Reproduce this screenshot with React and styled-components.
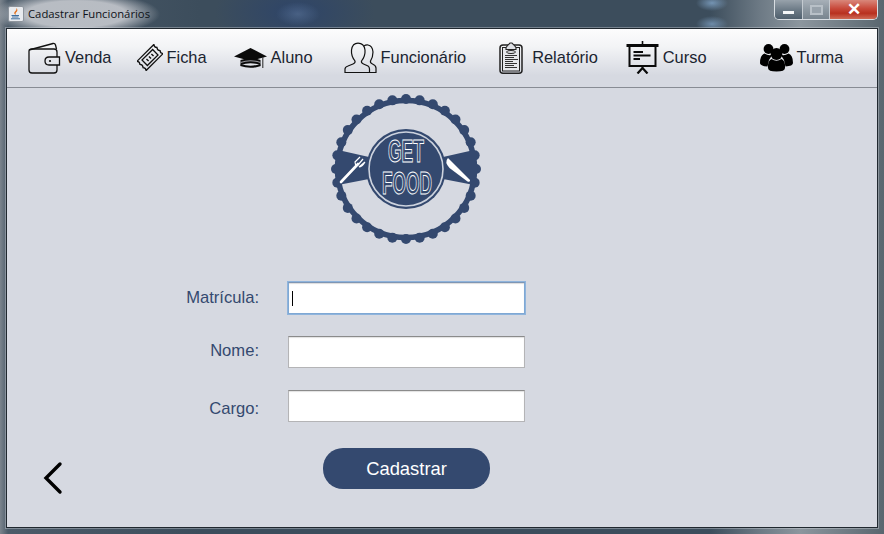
import React from "react"
import styled, { createGlobalStyle } from "styled-components"

const NAVY = "#34496f"
const PANEL = "#d6d9e1"

const GlobalStyle = createGlobalStyle`
  html, body {
    margin: 0;
    padding: 0;
    background: #3c4d5c;
  }
`

const LogoText = styled.text`
  font-family: "Liberation Sans", sans-serif;
  font-size: 31px;
  font-weight: 700;
  text-anchor: middle;
  fill: ${NAVY};
  stroke: #fff;
  stroke-width: 1;
`

const WalletIcon = () => (
  <svg width="34" height="34" viewBox="0 0 34 34" fill="none" stroke="#111" strokeWidth="1.3">
    <path d="M2 9 L26 2.5 Q28 2.2 28.5 4 L29.5 8" />
    <path d="M30 16 V11 Q30 8 27 8 H5 Q2 8 2 10 V29 Q2 32 5 32 H27 Q30 32 30 29 V24" />
    <path d="M32.5 16 H22 Q18 16 18 20 Q18 24 22 24 H32.5 Z" />
    <circle cx="23" cy="20" r="1.1" fill="#111" stroke="none" />
  </svg>
)

const TicketIcon = () => (
  <svg width="26" height="27" viewBox="-13 -13.5 26 27" fill="none" stroke="#111" strokeWidth="1.3">
    <g transform="rotate(-45)">
      <path d="M-12 -6.5 H12 Q10 -4.3 12 -2.2 Q10 0 12 2.2 Q10 4.3 12 6.5 H-12 Q-10 4.3 -12 2.2 Q-10 0 -12 -2.2 Q-10 -4.3 -12 -6.5 Z" />
      <rect x="-7.5" y="-3.8" width="15" height="7.6" />
      <path d="M-3.5 -1.5 V1.5 M0 -1.5 V1.5 M3.5 -1.5 V1.5" strokeWidth="1.4" />
    </g>
  </svg>
)

const CapIcon = () => (
  <svg width="33" height="24" viewBox="0 0 33 24">
    <path d="M0 10.5 L16.5 2 L33 10.5 L16.5 15 Z" fill="#0a0a0a" />
    <path d="M6.5 14 Q16.5 10.5 26.5 14 V19 Q16.5 15.5 6.5 19 Z" fill="#0a0a0a" />
    <path d="M6.5 16.5 Q16.5 13 26.5 16.5" stroke="#9a9aa0" strokeWidth="1.1" fill="none" />
    <path d="M6.5 19 Q16.5 22.5 26.5 19" stroke="#0a0a0a" strokeWidth="2.2" fill="none" />
    <path d="M28.8 11 V22" stroke="#333" strokeWidth="1.1" />
  </svg>
)

const PeopleIcon = () => (
  <svg width="33" height="32" viewBox="0 0 33 32" fill="none" stroke="#111" strokeWidth="1.2">
    <path d="M1 30.5 V27 Q1 25 4 24 L9 22 Q11.5 21 11 19 Q7 14 7.5 8 Q8.5 1.2 14 1.2 Q20 1.2 21 8 Q21.5 14 17.5 19 Q17 21 19.5 22 L24 24 Q25.5 25 25.5 27 V30.5 Z" />
    <path d="M20 4 Q21.5 2.8 24 3 Q28.5 3.8 29 10 Q29 15 26.5 19 Q26 21 28.5 22 Q32 23.5 32 26 V30.5 H25.5" />
  </svg>
)

const ClipboardIcon = () => (
  <svg width="24" height="32" viewBox="0 0 24 32" fill="none" stroke="#222">
    <rect x="1" y="3" width="22" height="28.2" rx="3" strokeWidth="1.5" />
    <rect x="3.5" y="5.5" width="17" height="23.5" fill="#e6e8ec" strokeWidth="1" />
    <path d="M7 5.5 L9 3 L11 1 H13 L15 3 L17 5.5 V7.5 H7 Z" fill="#dfe1e6" strokeWidth="1.1" />
    <ellipse cx="12" cy="10" rx="4.5" ry="1.5" strokeWidth="1" />
    <path d="M6 13.5 H18 M6 15.5 H15 M6 17.5 H19 M6 19.5 H14 M6 21.5 H18 M6 23.5 H15 M6 25.5 H18" strokeWidth="1.2" stroke="#333" />
  </svg>
)

const BoardIcon = () => (
  <svg width="33" height="33" viewBox="0 0 33 33" fill="none" stroke="#0a0a0a">
    <path d="M16.5 0 V4" strokeWidth="1.6" />
    <path d="M0.5 4.5 H32.5" strokeWidth="3" />
    <rect x="3.5" y="5" width="26" height="20" strokeWidth="2" />
    <path d="M7.5 11 H17 M7.5 14.5 H24.5 M7.5 18 H14" strokeWidth="1.8" />
    <path d="M16.5 25 V28 M16.5 27 L11.5 32.5 M16.5 27 L21.5 32.5" strokeWidth="2.2" />
  </svg>
)

const GroupIcon = () => (
  <svg width="33" height="28" viewBox="0 0 33 28" fill="#000">
    <circle cx="8.5" cy="5" r="4.9" />
    <circle cx="24.5" cy="5" r="4.9" />
    <path d="M0 19 Q0 11 4.5 9.5 Q9 12.5 12.5 10.5 L9 16 L7.5 22.5 Q0 22 0 19 Z" />
    <path d="M33 19 Q33 11 28.5 9.5 Q24 12.5 20.5 10.5 L24 16 L25.5 22.5 Q33 22 33 19 Z" />
    <circle cx="16.5" cy="10" r="5.9" />
    <path d="M8 24 Q7.5 16.5 11.5 15 Q16.5 18.5 21.5 15 Q25.5 16.5 25 24 Q25 27.5 16.5 27.5 Q8 27.5 8 24 Z" />
  </svg>
)

const JavaIcon = () => (
  <svg width="16" height="16" viewBox="0 0 16 16">
    <rect x="0.5" y="0.5" width="15" height="15" rx="1.5" fill="#e8ebef" stroke="#8d949c" />
    <path d="M8.5 2 Q10.5 4.5 8 6.5 Q7 7.5 8 9 Q5 7.5 7 5.5 Q8.8 4 8.5 2 Z" fill="#e2711d" />
    <path d="M3.5 9.5 H11 M4 11 H10.5 M3 12.8 H12" stroke="#3f6f9f" strokeWidth="1" />
  </svg>
)

const bumps = Array.from({ length: 32 }, (_, i) => {
  const angle = (i / 32) * Math.PI * 2
  return { x: 75 + Math.cos(angle) * 70, y: 75 + Math.sin(angle) * 70 }
})

const Logo = () => (
  <svg width="150" height="150" viewBox="0 0 150 150">
    {bumps.map((b, i) => (
      <circle key={i} cx={b.x} cy={b.y} r="5" fill={NAVY} />
    ))}
    <circle cx="75" cy="75" r="68.5" fill="none" stroke={NAVY} strokeWidth="5.5" />
    <path d="M7 56 L38 63 V85 L7 91 Z" fill={NAVY} />
    <path d="M143 56 L112 63 V85 L143 91 Z" fill={NAVY} />
    <circle cx="75" cy="75" r="40" fill={NAVY} />
    <circle cx="75" cy="75" r="37" fill="none" stroke="#cdd3de" strokeWidth="1.6" />
    <path d="M10 88 L27 70" stroke="#fff" strokeWidth="2.6" strokeLinecap="round" />
    <path d="M25 73 L24 68 L29 63 M27 71 L32 65 M28 73 L34 68 M28 73 Q31 73 34 68" stroke="#fff" strokeWidth="1.2" fill="none" />
    <path d="M117 64 L139 86 Q139.5 88.5 136.5 87.5 L118.5 74 Q113 68 117 64 Z" fill="#fff" />
    <LogoText x="75" y="68" textLength="36" lengthAdjust="spacingAndGlyphs">
      GET
    </LogoText>
    <LogoText x="76" y="100" textLength="50" lengthAdjust="spacingAndGlyphs">
      FOOD
    </LogoText>
  </svg>
)

const Shell = styled.div`
  width: 884px;
  height: 534px;
  display: flex;
  flex-direction: column;
  box-sizing: border-box;
  padding: 0 6px 6px;
  overflow: hidden;
  background:
    radial-gradient(ellipse 84px 22px at 76px 14px, rgba(190, 194, 200, 0.95) 60%, rgba(190, 194, 200, 0) 100%),
    radial-gradient(ellipse 22px 12px at 298px 14px, rgba(90, 115, 150, 0.6), rgba(90, 115, 150, 0) 100%),
    radial-gradient(ellipse 80px 40px at 295px 12px, rgba(40, 65, 110, 0.7), rgba(40, 65, 110, 0) 100%),
    radial-gradient(ellipse 16px 8px at 712px 3px, rgba(130, 165, 200, 0.8), rgba(130, 165, 200, 0) 100%),
    radial-gradient(ellipse 16px 8px at 712px 24px, rgba(130, 165, 200, 0.7), rgba(130, 165, 200, 0) 100%),
    linear-gradient(90deg, #7b848d 0, #4c5b69 8px, #3c4d5c 200px, #3c4d5c 710px, #6d7a85 760px, #8c969e 800px, #59666f 884px);
`

const TitleBar = styled.div`
  height: 28px;
  flex: none;
  display: flex;
  align-items: flex-start;
  justify-content: space-between;
  box-sizing: border-box;
  padding: 6px 0 0 2px;
`

const TitleGroup = styled.div`
  display: flex;
  align-items: center;
  gap: 4px;
`

const TitleText = styled.span`
  font-family: "Open Sans", sans-serif;
  font-size: 11.3px;
  line-height: 16px;
  color: #0e1218;
`

const WindowButtons = styled.div`
  display: flex;
  margin-top: -6px;
  height: 19px;
  border: 1px solid #d8dde2;
  border-top: none;
  border-radius: 0 0 5px 5px;
  overflow: hidden;
`

const WindowButton = styled.div`
  width: ${(p) => p.$w}px;
  display: flex;
  align-items: center;
  justify-content: center;
  font-family: "Liberation Sans", sans-serif;
  font-size: 17px;
  font-weight: 700;
  color: #fff;
  border-left: ${(p) => (p.$first ? "none" : "1px solid #c3cad0")};
  background: ${(p) =>
    p.$close
      ? "linear-gradient(180deg, #d9877a 0, #c8493a 45%, #b8301f 70%, #cf6a55 100%)"
      : p.$dim
        ? "linear-gradient(180deg, #a7b0b8 0, #8d98a1 50%, #79858f 100%)"
        : "linear-gradient(180deg, #98a2ab 0, #6e7c88 50%, #4f5f6d 100%)"};
`

const MinGlyph = styled.span`
  width: 11px;
  height: 3px;
  margin-top: 5px;
  background: #f4f6f8;
`

const MaxGlyph = styled.span`
  width: 9px;
  height: 6px;
  border: 2px solid #b8c0c7;
  background: #98a2ab;
`

const Panel = styled.div`
  flex: 1;
  display: flex;
  flex-direction: column;
  background: ${PANEL};
  border: 1px solid #20282f;
  box-shadow: 0 0 0 1px rgba(225, 230, 235, 0.35);
`

const Toolbar = styled.nav`
  height: 59px;
  flex: none;
  display: flex;
  align-items: center;
  padding: 0 0 1px 20px;
  box-sizing: border-box;
  background: linear-gradient(180deg, #fcfcfd 0, #f3f4f6 30%, #d6d9e1 80%, #d6d9e1 100%);
  border-bottom: 1px solid #888c94;
`

const ToolItem = styled.a`
  display: flex;
  align-items: center;
  gap: ${(p) => p.$gap || 4}px;
  margin-left: ${(p) => p.$before || 0}px;
  font-family: "Liberation Sans", sans-serif;
  font-size: 16.4px;
  color: #1b2430;
`

const Main = styled.main`
  flex: 1;
  display: flex;
  flex-direction: column;
`

const LogoWrap = styled.div`
  display: flex;
  margin: 6px 0 0 324px;
`

const Form = styled.form`
  display: flex;
  flex-direction: column;
  gap: 22px;
  margin-top: 38px;
`

const Row = styled.div`
  display: grid;
  grid-template-columns: 252px 237px;
  column-gap: 29px;
  align-items: center;
`

const Label = styled.label`
  text-align: right;
  font-family: "Liberation Sans", sans-serif;
  font-size: 16.6px;
  color: ${NAVY};
  padding-top: ${(p) => p.$down || 0}px;
  padding-bottom: ${(p) => p.$up || 0}px;
`

const Field = styled.div`
  height: 32px;
  box-sizing: border-box;
  display: flex;
  align-items: center;
  padding-left: 3px;
  background: #fff;
  border: 1px solid #b4b4b6;
  border-top-color: #8b8b8b;
  box-shadow: inset 0 1px 1px #e2e2e2;
  ${(p) =>
    p.$focused &&
    `
    border-color: #7fa8d4;
    border-top-color: #7d95b4;
    box-shadow: 0 0 0 1px #8fb4dc, inset 0 1px 1px #dcdcdc;
  `}
`

const Caret = styled.span`
  width: 1px;
  height: 15px;
  background: #000;
`

const Actions = styled.div`
  display: flex;
  align-items: flex-start;
  margin-top: 26px;
`

const BackButton = styled.button`
  width: 26px;
  height: 36px;
  margin: 13px 0 0 32px;
  padding: 0;
  border: none;
  background: none;
`

const SubmitButton = styled.button`
  width: 167px;
  height: 41px;
  margin-left: 258px;
  border: none;
  border-radius: 20px;
  background: ${NAVY};
  color: #fff;
  font-family: "Liberation Sans", sans-serif;
  font-size: 18.4px;
`

const tools = [
  { label: "Venda", icon: <WalletIcon />, before: 0 },
  { label: "Ficha", icon: <TicketIcon />, before: 25 },
  { label: "Aluno", icon: <CapIcon />, before: 27 },
  { label: "Funcionário", icon: <PeopleIcon />, before: 31 },
  { label: "Relatório", icon: <ClipboardIcon />, before: 33, gap: 9 },
  { label: "Curso", icon: <BoardIcon />, before: 28 },
  { label: "Turma", icon: <GroupIcon />, before: 53 },
]

export default function App() {
  return (
    <>
      <GlobalStyle />
      <Shell>
        <TitleBar>
          <TitleGroup>
            <JavaIcon />
            <TitleText>Cadastrar Funcionários</TitleText>
          </TitleGroup>
          <WindowButtons>
            <WindowButton $w={27} $first>
              <MinGlyph />
            </WindowButton>
            <WindowButton $w={26} $dim>
              <MaxGlyph />
            </WindowButton>
            <WindowButton $w={47} $close>
              ✕
            </WindowButton>
          </WindowButtons>
        </TitleBar>
        <Panel>
          <Toolbar>
            {tools.map((t) => (
              <ToolItem key={t.label} $before={t.before} $gap={t.gap}>
                {t.icon}
                {t.label}
              </ToolItem>
            ))}
          </Toolbar>
          <Main>
            <LogoWrap>
              <Logo />
            </LogoWrap>
            <Form>
              <Row>
                <Label>Matrícula:</Label>
                <Field $focused>
                  <Caret />
                </Field>
              </Row>
              <Row>
                <Label $up={2}>Nome:</Label>
                <Field />
              </Row>
              <Row>
                <Label $down={6}>Cargo:</Label>
                <Field />
              </Row>
            </Form>
            <Actions>
              <BackButton type="button" aria-label="Voltar">
                <svg width="26" height="36" viewBox="0 0 26 36" fill="none" stroke="#000" strokeWidth="3.4" strokeLinecap="round">
                  <path d="M21 3 L7 17 L21 31" />
                </svg>
              </BackButton>
              <SubmitButton type="button">Cadastrar</SubmitButton>
            </Actions>
          </Main>
        </Panel>
      </Shell>
    </>
  )
}
